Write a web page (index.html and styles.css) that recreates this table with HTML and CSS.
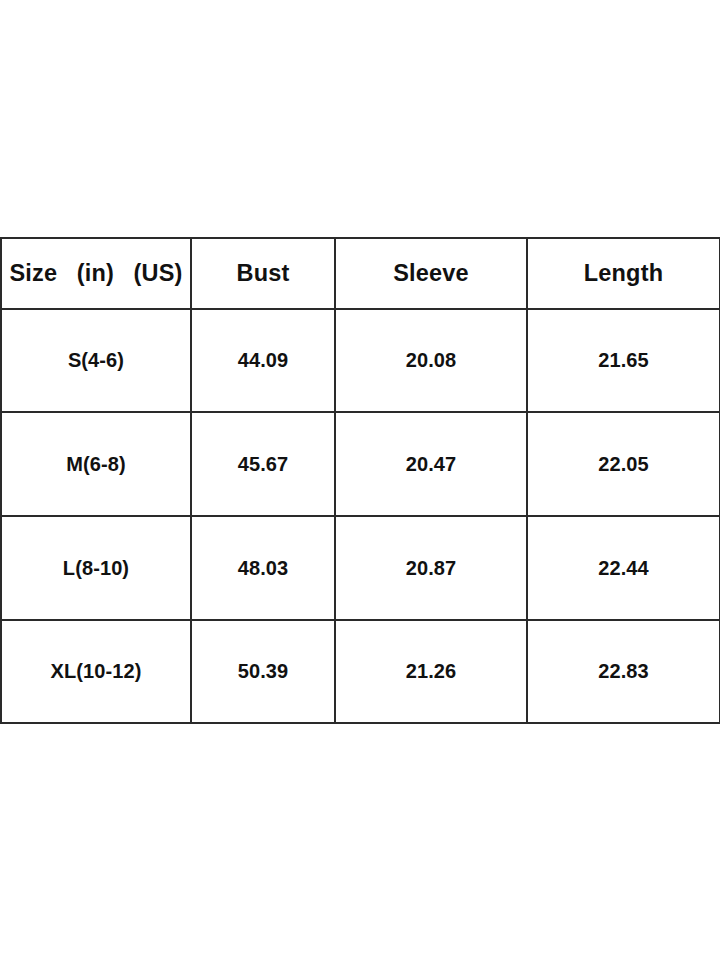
FILE: index.html
```html
<!DOCTYPE html>
<html>
<head>
<meta charset="utf-8">
<link rel="stylesheet" href="styles.css">
</head>
<body>
<div class="page">
<table class="sizes">
  <colgroup>
    <col class="c1"><col class="c2"><col class="c3"><col class="c4">
  </colgroup>
  <thead>
    <tr class="head">
      <th class="wide">Size&nbsp; (in)&nbsp; (US)</th>
      <th>Bust</th>
      <th>Sleeve</th>
      <th>Length</th>
    </tr>
  </thead>
  <tbody>
    <tr class="r-short"><td>S(4-6)</td><td>44.09</td><td>20.08</td><td>21.65</td></tr>
    <tr class="r-tall"><td>M(6-8)</td><td>45.67</td><td>20.47</td><td>22.05</td></tr>
    <tr class="r-tall"><td>L(8-10)</td><td>48.03</td><td>20.87</td><td>22.44</td></tr>
    <tr class="r-short"><td>XL(10-12)</td><td>50.39</td><td>21.26</td><td>22.83</td></tr>
  </tbody>
</table>
</div>
</body>
</html>
```
FILE: styles.css
```css
html, body {
  margin: 0;
  padding: 0;
  background: #fff;
}
.page {
  width: 720px;
  height: 960px;
  padding-top: 237px;
  box-sizing: border-box;
}
.sizes {
  width: 719px;
  border-collapse: collapse;
  table-layout: fixed;
  font-family: "Liberation Sans", Arial, sans-serif;
  font-weight: bold;
  color: #111;
  text-align: center;
}
.c1 { width: 190px; }
.c2 { width: 144px; }
.c3 { width: 192px; }
.c4 { width: 193px; }
.sizes th, .sizes td {
  border: 2px solid #2a2a2a;
  padding: 0;
  vertical-align: middle;
  white-space: nowrap;
}
.sizes th {
  height: 69px;
  font-size: 23.5px;
  letter-spacing: 0.2px;
}
.sizes th.wide {
  word-spacing: 3px;
}
.sizes td {
  font-size: 20px;
  letter-spacing: 0.1px;
}
.r-short td { height: 101px; }
.r-tall td { height: 102px; }
```
